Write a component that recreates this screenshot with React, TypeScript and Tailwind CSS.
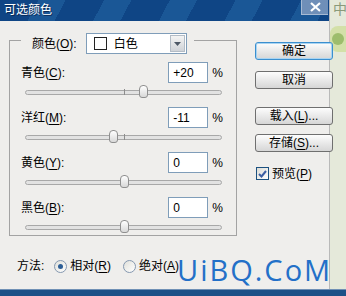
import React from "react";

const rows = [
  { label: "青色", key: "C", value: 20 },
  { label: "洋红", key: "M", value: -11 },
  { label: "黄色", key: "Y", value: 0 },
  { label: "黑色", key: "B", value: 0 },
];

function fmt(v: number) {
  return v > 0 ? "+" + v : String(v);
}

function Key({ k }: { k: string }) {
  return (
    <>
      (<span className="underline underline-offset-2">{k}</span>)
    </>
  );
}

function Slider({ value }: { value: number }) {
  const pct = ((value + 100) / 200) * 100;
  return (
    <div className="relative ml-[15px] w-[197px] h-[18px] flex items-center">
      <div className="w-full h-[5px] rounded-full border border-[#a8a8a8] bg-[#e2e2e2]" />
      <div className="absolute left-1/2 top-[6px] h-[6px] w-px bg-[#8c8c8c]" />
      <div
        className="absolute top-[2px] -ml-[4px] h-[13px] w-[9px] rounded-t-[4px] rounded-b-[3px] border border-[#8f8f8f] bg-gradient-to-b from-[#ffffff] to-[#d8d8d8]"
        style={{ left: pct + "%" }}
      />
    </div>
  );
}

function Btn({ children, primary }: { children: React.ReactNode; primary?: boolean }) {
  return (
    <div
      className={
        "h-[18px] w-[78px] flex items-center justify-center rounded-[3px] border bg-gradient-to-b from-[#fdfdfd] to-[#d6d6d6] text-[12px] leading-none text-black " +
        (primary ? "border-[#3b8fcf] shadow-[inset_0_0_0_1px_#a9d4f2]" : "border-[#6f6f6f]")
      }
    >
      {children}
    </div>
  );
}

export default function App() {
  return (
    <div className="relative w-[346px] h-[296px] flex flex-col overflow-hidden bg-[#e6eadc] font-['Liberation_Sans','Noto_Sans_CJK_SC',sans-serif] text-[12px] text-black">
      <div className="flex flex-1 min-h-0">
        {/* dialog */}
        <div className="relative z-10 w-[330px] shrink-0 flex flex-col bg-[#efeeec] border-r border-[#b9b9b9]">
          {/* title bar */}
          <div className="h-[21px] shrink-0 flex items-start bg-[repeating-linear-gradient(118deg,#0f4585_0px,#0f4585_34px,#1a5796_34px,#1a5796_58px)]">
            <span className="pl-[4px] pt-[4px] text-[12px] leading-none text-white [text-shadow:1px_1px_0_#0a2a55]">
              可选颜色
            </span>
            <div className="ml-auto mr-[1px] h-[15px] w-[27px] flex items-center justify-center bg-[#6f8fb8] border-l border-b border-[#a7bad3]">
              <svg width="11" height="10" viewBox="0 0 11 10">
                <path d="M1 1 L10 9 M10 1 L1 9" stroke="#ffffff" strokeWidth="2.2" />
              </svg>
            </div>
          </div>

          {/* body */}
          <div className="flex-1 flex flex-col">
            <div className="flex items-start">
              {/* group box */}
              <div className="ml-[9px] mt-[12px] w-[228px] shrink-0">
                <div className="flex h-[21px]">
                  <div className="w-[12px] mt-[7px] border-t border-l border-[#a3a3a3]" />
                  <div className="flex items-center pl-[11px] pr-[7px]">
                    <span className="leading-none">
                      颜色<Key k="O" />:
                    </span>
                    <div className="ml-[9px] w-[101px] h-[21px] flex items-center bg-white border border-[#7f9db9]">
                      <div className="ml-[7px] w-[13px] h-[13px] border border-[#222]" />
                      <span className="ml-[7px] leading-none">白色</span>
                      <div className="ml-auto mr-[1px] w-[15px] h-[17px] flex items-center justify-center border border-[#b3bcc6] bg-gradient-to-b from-[#f4f4f4] to-[#cfd3d8]">
                        <svg width="7" height="4" viewBox="0 0 7 4">
                          <path d="M0 0 H7 L3.5 4 Z" fill="#4d5866" />
                        </svg>
                      </div>
                    </div>
                  </div>
                  <div className="flex-1 mt-[7px] border-t border-r border-[#a3a3a3]" />
                </div>
                <div className="h-[182px] flex flex-col gap-[6px] pt-[8px] border-l border-r border-b border-[#a3a3a3]">
                  {rows.map((r) => (
                    <div key={r.key} className="flex flex-col">
                      <div className="h-[21px] flex items-center pl-[11px] pr-[13px]">
                        <span className="leading-none">
                          {r.label}
                          <Key k={r.key} />:
                        </span>
                        <div className="ml-auto w-[40px] h-[21px] flex items-center pl-[4px] bg-white border border-[#7f9db9] leading-none">
                          {fmt(r.value)}
                        </div>
                        <span className="ml-[4px] leading-none">%</span>
                      </div>
                      <Slider value={r.value} />
                    </div>
                  ))}
                </div>
              </div>

              {/* buttons */}
              <div className="ml-[18px] pt-[21px] w-[78px] shrink-0 flex flex-col">
                <Btn primary>确定</Btn>
                <div className="mt-[11px]">
                  <Btn>取消</Btn>
                </div>
                <div className="mt-[18px]">
                  <Btn>
                    载入<Key k="L" />...
                  </Btn>
                </div>
                <div className="mt-[9px]">
                  <Btn>
                    存储<Key k="S" />...
                  </Btn>
                </div>
                <div className="mt-[15px] flex items-center">
                  <div className="ml-[1px] w-[13px] h-[13px] flex items-center justify-center border border-[#1c5180] bg-gradient-to-br from-[#dcdcd6] to-white">
                    <svg width="9" height="8" viewBox="0 0 9 8">
                      <path d="M1 4 L3.5 6.5 L8 1" stroke="#3d5fa3" strokeWidth="2" fill="none" />
                    </svg>
                  </div>
                  <span className="ml-[3px] leading-none">
                    预览<Key k="P" />
                  </span>
                </div>
              </div>
            </div>

            {/* method */}
            <div className="mt-[22px] h-[16px] flex items-center pl-[17px]">
              <span className="leading-none">方法:</span>
              <div className="ml-[10px] w-[13px] h-[13px] rounded-full border border-[#8598b0] bg-gradient-to-br from-[#e0e0da] to-white flex items-center justify-center">
                <div className="w-[5px] h-[5px] rounded-full bg-[#2d5e96]" />
              </div>
              <span className="ml-[3px] leading-none">
                相对<Key k="R" />
              </span>
              <div className="ml-[12px] w-[13px] h-[13px] rounded-full border border-[#8598b0] bg-gradient-to-br from-[#e0e0da] to-white" />
              <span className="ml-[3px] leading-none">
                绝对<Key k="A" />
              </span>
            </div>
          </div>
        </div>

        {/* window behind */}
        <div className="flex-1 flex flex-col bg-[#e5e9da]">
          <span className="mt-[2px] ml-[3px] text-[14px] leading-none text-[#8a9a7a]">中</span>
          <div className="mt-[10px] h-[26px] rounded-l-[8px] bg-[#d3e0a8] flex items-center pl-[2px]">
            <div className="w-[12px] h-[12px] rounded-full bg-[#9dbd6c]" />
          </div>
        </div>
      </div>

      <div className="h-[7px] shrink-0 bg-[#1d5087] border-t border-[#7090b5]" />

      <span className="absolute z-20 left-[177px] top-[255px] text-[29px] leading-none tracking-[2px] font-medium text-[#2370c8] font-['Open_Sans',sans-serif]">
        UiBQ.CoM
      </span>
    </div>
  );
}
